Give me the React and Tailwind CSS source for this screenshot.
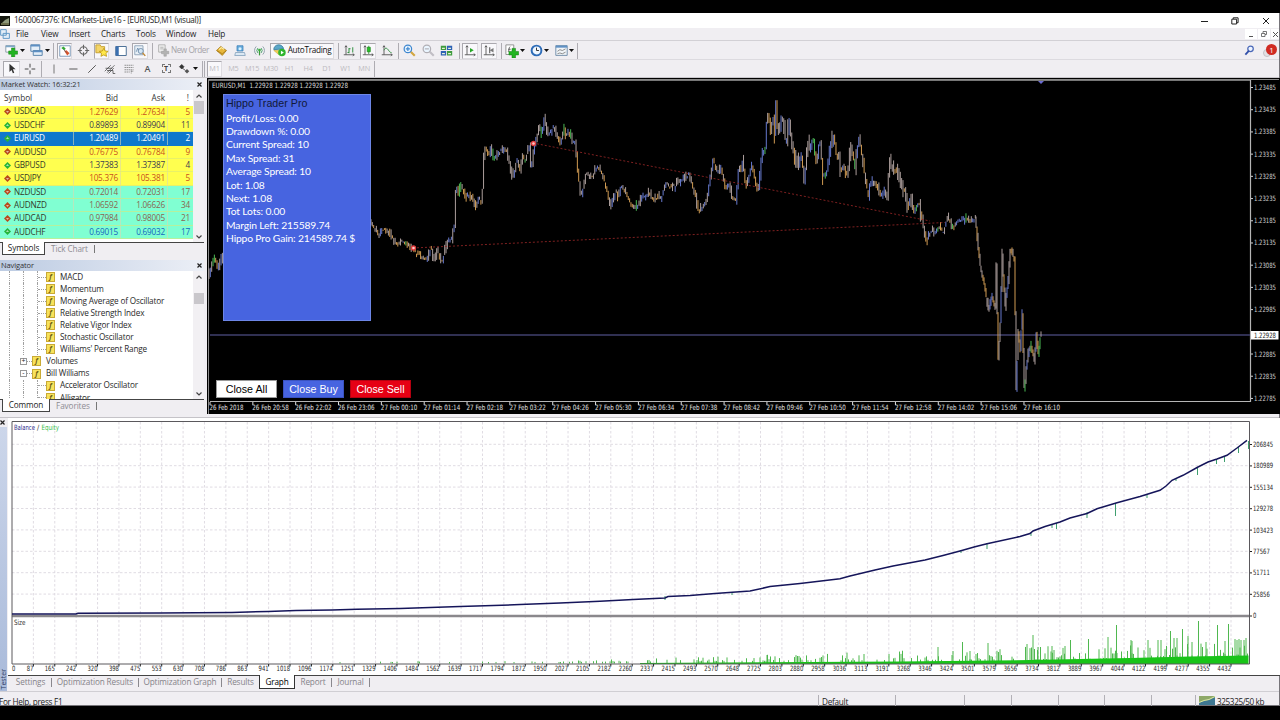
const UI = "font-['Open_Sans','Noto_Sans',sans-serif]";
const CHART_FONT = "'DejaVu Sans Condensed','DejaVu Sans',sans-serif";

/* ---------- data ---------- */

const MENU = [
  { label: 'File', w: 'w-[25px]' },
  { label: 'View', w: 'w-[28px]' },
  { label: 'Insert', w: 'w-[32px]' },
  { label: 'Charts', w: 'w-[35px]' },
  { label: 'Tools', w: 'w-[30px]' },
  { label: 'Window', w: 'w-[42px]' },
  { label: 'Help', w: 'w-[30px]' },
];

const QUOTES = [
  { symbol: 'USDCAD', bid: '1.27629', ask: '1.27634', spread: 5, up: false, bg: 'bg-[#ffff4f]', color: 'text-[#c8501e]' },
  { symbol: 'USDCHF', bid: '0.89893', ask: '0.89904', spread: 11, up: true, bg: 'bg-[#ffff4f]', color: 'text-[#3c3c50]' },
  { symbol: 'EURUSD', bid: '1.20489', ask: '1.20491', spread: 2, up: true, bg: 'bg-[#0f78cc]', color: 'text-white', selected: true },
  { symbol: 'AUDUSD', bid: '0.76775', ask: '0.76784', spread: 9, up: false, bg: 'bg-[#ffff4f]', color: 'text-[#c8501e]' },
  { symbol: 'GBPUSD', bid: '1.37383', ask: '1.37387', spread: 4, up: true, bg: 'bg-[#ffff4f]', color: 'text-[#3c3c50]' },
  { symbol: 'USDJPY', bid: '105.376', ask: '105.381', spread: 5, up: false, bg: 'bg-[#ffff4f]', color: 'text-[#c8501e]' },
  { symbol: 'NZDUSD', bid: '0.72014', ask: '0.72031', spread: 17, up: false, bg: 'bg-[#80ffd2]', color: 'text-[#8a6450]' },
  { symbol: 'AUDNZD', bid: '1.06592', ask: '1.06626', spread: 34, up: false, bg: 'bg-[#80ffd2]', color: 'text-[#8a6450]' },
  { symbol: 'AUDCAD', bid: '0.97984', ask: '0.98005', spread: 21, up: false, bg: 'bg-[#80ffd2]', color: 'text-[#8a6450]' },
  { symbol: 'AUDCHF', bid: '0.69015', ask: '0.69032', spread: 17, up: true, bg: 'bg-[#80ffd2]', color: 'text-[#1464c0]' },
];

const TREE = [
  { label: 'MACD', child: true },
  { label: 'Momentum', child: true },
  { label: 'Moving Average of Oscillator', child: true },
  { label: 'Relative Strength Index', child: true },
  { label: 'Relative Vigor Index', child: true },
  { label: 'Stochastic Oscillator', child: true },
  { label: "Williams' Percent Range", child: true },
  { label: 'Volumes', sign: '+' },
  { label: 'Bill Williams', sign: '-' },
  { label: 'Accelerator Oscillator', child: true },
  { label: 'Alligator', child: true },
];

// the current bid covers the 1.22935 label, so that step stays empty
const PRICES = [
  '1.23485', '1.23435', '1.23385', '1.23335', '1.23285', '1.23235', '1.23185', '1.23135',
  '1.23085', '1.23035', '1.22985', '', '1.22885', '1.22835', '1.22785',
];

const TIMES = [
  '26 Feb 2018', '26 Feb 20:58', '26 Feb 22:02', '26 Feb 23:06', '27 Feb 00:10', '27 Feb 01:14', '27 Feb 02:18',
  '27 Feb 03:22', '27 Feb 04:26', '27 Feb 05:30', '27 Feb 06:34', '27 Feb 07:38', '27 Feb 08:42', '27 Feb 09:46',
  '27 Feb 10:50', '27 Feb 11:54', '27 Feb 12:58', '27 Feb 14:02', '27 Feb 15:06', '27 Feb 16:10',
];

const EA_LINES = [
  'Profit/Loss: 0.00',
  'Drawdown %: 0.00',
  'Current Spread: 10',
  'Max Spread: 31',
  'Average Spread: 10',
  'Lot: 1.08',
  'Next: 1.08',
  'Tot Lots: 0.00',
  'Margin Left: 215589.74',
  'Hippo Pro Gain: 214589.74 $',
];

const PRICE_PATHS = [
  [[209, 278], [212, 270], [215, 256], [219, 266], [223, 255]],
  [
    [371, 224], [378, 231], [380, 239], [382, 229], [387, 228], [393, 239], [399, 243], [405, 241], [413, 248], [418, 254],
    [422, 256], [428, 261], [432, 248], [436, 262], [438, 249], [443, 263], [447, 245], [453, 237], [456, 223],
    [457, 184], [459, 193], [462, 185], [467, 198], [470, 193], [473, 198], [477, 208], [480, 197], [483, 203],
    [485, 152], [487, 147], [490, 157], [492, 143], [494, 160], [500, 153], [505, 149], [508, 153], [512, 170],
    [514, 178], [518, 158], [522, 173], [523, 153], [526, 160], [531, 144], [532, 174], [535, 150], [540, 129],
    [543, 133], [545, 118], [549, 134], [555, 127], [561, 143], [565, 127], [567, 138], [570, 129], [573, 143],
    [576, 140], [579, 173], [582, 199], [587, 172], [593, 179], [598, 167], [603, 173], [608, 190], [611, 205],
    [617, 190], [619, 198], [622, 185], [627, 193], [632, 203], [637, 207], [642, 198], [650, 194], [653, 198],
    [663, 196], [667, 184], [675, 187], [683, 179], [690, 175], [695, 190], [700, 212], [707, 201], [711, 180],
    [714, 159], [718, 173], [722, 168], [727, 190], [730, 182], [733, 199], [737, 201], [740, 162], [742, 172],
    [744, 160], [747, 187], [753, 164], [757, 183], [759, 194], [763, 153], [767, 147], [768, 109], [772, 135],
    [774, 111], [776, 141], [777, 102], [779, 137], [783, 114], [787, 145], [790, 117], [793, 148], [798, 163],
    [803, 156], [805, 182], [809, 143], [811, 150], [814, 135], [817, 163], [821, 141], [824, 178], [828, 170],
    [832, 144], [835, 135], [837, 153], [841, 160], [842, 181], [843, 163], [848, 175], [852, 148], [856, 167],
    [860, 138], [865, 170], [869, 194], [873, 180], [877, 184], [882, 198], [885, 188], [889, 203], [890, 158],
    [893, 167], [898, 172], [902, 187], [906, 192], [909, 209], [912, 198], [915, 211], [920, 204], [923, 217],
    [925, 233], [928, 242], [930, 233], [934, 232], [940, 226], [944, 232], [949, 217], [955, 227], [960, 220],
    [967, 218], [972, 223], [976, 218],
  ],
  [
    [976, 218], [978, 237], [981, 267], [985, 283], [989, 311], [993, 295], [996, 307], [997, 267], [999, 358],
    [1001, 323], [1003, 253], [1004, 273], [1006, 307], [1009, 280], [1011, 248], [1015, 259], [1016, 313],
    [1017, 388], [1019, 330], [1021, 350], [1023, 312], [1025, 388], [1029, 353], [1032, 345], [1035, 361],
    [1037, 333], [1039, 355], [1041, 337],
  ],
];

const BALANCE = [
  [12, 614], [76, 614], [78, 613.2], [160, 613], [232, 612.4], [268, 611.4], [296, 610.5], [332, 610], [357, 609.2],
  [400, 608.4], [460, 606.5], [520, 604.6], [560, 603], [600, 601.2], [633, 599.5], [665, 598], [668, 596.5],
  [690, 595.5], [715, 593.6], [750, 591], [770, 586.6], [800, 583.4], [840, 578.8], [850, 576], [875, 570], [893, 566],
  [925, 560], [943, 555.5], [960, 551], [975, 546.7], [987, 543.7], [1020, 536.5], [1030, 533.5], [1033, 531],
  [1045, 526.5], [1060, 522], [1070, 518], [1087, 513.5], [1097, 508.7], [1117, 502.7], [1140, 496.5], [1160, 490.3],
  [1166, 486], [1172, 480.3], [1183, 475.3], [1198, 467], [1208, 462], [1217, 459], [1227, 455.3], [1237, 448], [1247, 440.3],
];

const DRAWDOWNS = [
  [665, 596, 600], [732, 592, 595], [961, 550, 553], [987, 543, 549], [1031, 532, 536], [1052, 524, 528], [1056.5, 523, 529],
  [1087, 512, 518], [1115.5, 503, 516], [1147, 494, 498], [1176, 478, 481], [1197.5, 467, 475], [1216.5, 459, 464],
  [1224.5, 456, 462], [1238.5, 447, 453], [1248.5, 441, 449],
];

const SIZE_SPIKES = [
  [767, 655], [864, 654], [889, 654], [938, 647], [953, 651], [962.5, 642], [970, 651], [988, 643], [1027, 644], [1033, 635], [1038, 647],
  [1052, 646], [1065, 646], [1070.5, 640], [1088.5, 639], [1108, 637], [1116.5, 625], [1131, 640], [1132, 641],
  [1148, 640], [1158, 640], [1161, 640], [1170.5, 631], [1174, 638], [1177, 638], [1182.5, 629], [1188, 636],
  [1192, 642], [1198.5, 621], [1206, 642], [1217.5, 625], [1225, 641], [1228.5, 624], [1235, 639], [1237, 640],
  [1239, 639], [1241, 640], [1244, 640], [1246, 638],
];

const PASSES = [
  87, 165, 242, 320, 398, 475, 553, 630, 708, 786, 863, 941, 1018, 1096, 1174, 1251, 1329, 1406, 1484, 1562, 1639, 1717,
  1794, 1872, 1950, 2027, 2105, 2182, 2260, 2337, 2415, 2493, 2570, 2648, 2725, 2803, 2880, 2958, 3036, 3113, 3191, 3268,
  3346, 3424, 3501, 3579, 3656, 3734, 3812, 3889, 3967, 4044, 4122, 4199, 4277, 4355, 4432,
];

const BALANCE_TICKS = ['206845', '180989', '155134', '129278', '103423', '77567', '51711', '25856', '0'];

// small deterministic noise so the bars look the same on every render
function noise(n) {
  const v = Math.sin(n * 127.1 + 11.7) * 43758.5453;
  return v - Math.floor(v);
}

function valueAt(points, x) {
  for (let i = 1; i < points.length; i++) {
    if (x <= points[i][0]) {
      const [x0, y0] = points[i - 1];
      const [x1, y1] = points[i];
      return y0 + ((y1 - y0) * (x - x0)) / (x1 - x0);
    }
  }
  return points[points.length - 1][1];
}

/* ---------- icons ---------- */

function Icon({ size = 12, children }) {
  return (
    <svg width={size} height={size} viewBox="0 0 16 16" fill="none" className="shrink-0">
      {children}
    </svg>
  );
}

const Caret = () => (
  <span className="w-[5px] flex justify-center">
    <svg width="5" height="3" viewBox="0 0 5 3"><path d="M0 0h5L2.5 3z" fill="#111" /></svg>
  </span>
);

const Sep = ({ className = '' }) => <span className={`w-px h-4 bg-[#aeacb2] ${className}`} />;

function Slot({ className = '', pressed, children }) {
  return (
    <span className={`flex items-center justify-center h-4 shrink-0 ${pressed ? 'bg-[#f9f8fb] border border-r-[#dddbe0] border-b-[#dddbe0] border-t-[#aaa8ae] border-l-[#aaa8ae]' : ''} ${className}`}>
      {children}
    </span>
  );
}

const Plus = () => <path d="M8 5h4v3.500h3.500v4H12V16H8v-3.500H4.500v-4H8z" fill="#22b422" stroke="#128012" strokeWidth=".6" />;

const NewChartIcon = () => (
  <Icon size={13}>
    <path d="M1 2h11v8H1z" fill="#fff" stroke="#7d8f9c" />
    <path d="M1 2h11v2H1z" fill="#7da7c9" />
    <Plus />
  </Icon>
);
const ProfilesIcon = () => (
  <Icon size={13}>
    <path d="M1 1h11v8H1zM4 8h11v6H4z" fill="#e4eef8" stroke="#5d86ad" strokeWidth="1.2" />
    <path d="M1 1h11v2H1zM4 8h11v2H4z" fill="#5d8fc4" />
  </Icon>
);
const MarketIcon = () => (
  <Icon>
    <path d="M1 1h14v14H1z" fill="#fff" stroke="#5f84a8" />
    <path d="M3 4l3-2 3 3-2 2z" fill="#33a833" />
    <path d="M7 8l3-1 4 4-3 3z" fill="#d8552d" />
    <path d="M6 6l4 4" stroke="#555" />
  </Icon>
);
const TargetIcon = () => (
  <Icon size={13}>
    <circle cx="8" cy="8" r="4.6" stroke="#666" strokeWidth="1.5" />
    <path d="M8 1v5M8 10v5M1 8h5M10 8h5" stroke="#666" strokeWidth="1.3" />
  </Icon>
);
const StarFolderIcon = () => (
  <Icon size={14}>
    <path d="M1 1h5l1 2h4v7H1z" fill="#f4d568" stroke="#c49b28" />
    <path d="M10 5l1.6 3 3.4.4-2.5 2.3.7 3.4-3.2-1.6-3.2 1.6.7-3.4L5 8.400l3.400-.4z" fill="#ffe84a" stroke="#b8920f" strokeWidth=".9" />
  </Icon>
);
const PanelIcon = () => (
  <Icon>
    <path d="M1 2h14v12H1z" fill="#fff" stroke="#4b6f96" strokeWidth="1.3" />
    <path d="M1 2h4v12H1z" fill="#3a6fb0" />
  </Icon>
);
const TesterIcon = () => (
  <Icon>
    <path d="M1 1h11v12H1z" fill="#e9f0f7" stroke="#7891aa" />
    <path d="M3 9l2-5 2 5 2-3" stroke="#5f84a8" />
    <circle cx="9" cy="8" r="3.400" fill="#d5e6f5" stroke="#5d7c9c" />
    <path d="M11.500 10.500l3.500 4" stroke="#c08a3a" strokeWidth="2" />
  </Icon>
);
const OrderIcon = () => (
  <Icon size={13}>
    <path d="M2 1h8v9H2z" fill="#eee" stroke="#aaa" />
    <path d="M4 4h4M4 6h4" stroke="#aaa" />
    <path d="M8.500 6h3v3h3v3h-3v3h-3v-3h-3V9h3z" fill="#b3b3b3" stroke="#999" strokeWidth=".6" />
  </Icon>
);
const GoldIcon = () => (
  <Icon size={13}>
    <path d="M2 8l5-5 7 5-5 6z" fill="#e7b73c" stroke="#a87a14" />
    <path d="M2 8l7 4 5-4" stroke="#a87a14" />
    <path d="M5 7l3-2.500 3 2" stroke="#fff0a8" strokeWidth="1.300" />
  </Icon>
);
const ServerIcon = () => (
  <Icon>
    <path d="M4 1h8v7H4z" fill="#69aede" stroke="#3b7eb5" />
    <path d="M2 10h12l1 4H1z" fill="#dbe8f3" stroke="#7c9cb8" />
    <circle cx="8" cy="5" r="2" fill="#d9f1ff" />
  </Icon>
);
const SignalIcon = () => (
  <Icon size={13}>
    <path d="M4 3a7 7 0 000 10M12 3a7 7 0 010 10" stroke="#93a4ad" strokeWidth="1.200" />
    <path d="M6 5a4.500 4.500 0 000 6M10 5a4.500 4.500 0 010 6" stroke="#4aa06a" strokeWidth="1.200" />
    <path d="M8 8v6" stroke="#3a9a3a" strokeWidth="1.500" />
    <circle cx="8" cy="7.500" r="1.700" fill="#3ab03a" />
  </Icon>
);
const AutoIcon = () => (
  <Icon size={13}>
    <path d="M1 7a6 5.500 0 0112-1z" fill="#5ba7c8" stroke="#3a7d9c" />
    <path d="M1 8l6 5 5-5z" fill="#f0cf52" stroke="#c79f2c" strokeWidth=".6" />
    <circle cx="11" cy="10.500" r="4.600" fill="#2fb52f" />
    <path d="M9.800 8.200v4.600l3.500-2.300z" fill="#fff" />
  </Icon>
);
const Axes = ({ children }) => (
  <Icon>
    <path d="M4 1v12M1 13h14M4 1L2.500 3M4 1l1.500 2M15 13l-2-1.500M15 13l-2 1.500" stroke="#555" strokeWidth="1.200" />
    {children}
  </Icon>
);
const Magnifier = ({ plus, color = '#3d86cf', handle = '#d2a640' }) => (
  <Icon size={13}>
    <path d="M9.500 9.500l5 5" stroke={handle} strokeWidth="2.600" />
    <circle cx="6" cy="6" r="4.600" fill="#eaf5ff" stroke={color} strokeWidth="1.500" />
    <path d={plus ? 'M6 3.500v5M3.500 6h5' : 'M3.500 6h5'} stroke={color} strokeWidth="1.400" />
  </Icon>
);
const TileIcon = () => (
  <Icon size={13}>
    <path d="M1 2h6.500v5.500H1z M8.500 8.500H15V14H8.500z" fill="#3f9c3f" />
    <path d="M8.500 2H15v5.500H8.500z M1 8.500h6.500V14H1z" fill="#2d62b5" />
    <path d="M2.500 4.500h3.500v1.500H2.500zM10 4.500h3.500v1.500H10zM2.500 11h3.500v1.500H2.500zM10 11h3.500v1.500H10z" fill="#e8f3d8" />
  </Icon>
);
const IndicatorIcon = () => (
  <Icon size={14}>
    <path d="M1 1h9v11H1z" fill="#fff" stroke="#888" />
    <path d="M6 3C4 3 5 9 3.500 9M3.500 6h3" stroke="#555" />
    <Plus />
  </Icon>
);
const ClockIcon = () => (
  <Icon size={13}>
    <circle cx="8" cy="8" r="6" fill="#f0f7ff" stroke="#2d6cb8" strokeWidth="2.400" />
    <path d="M8 4.500V8h3" stroke="#333" strokeWidth="1.200" />
  </Icon>
);
const TemplateIcon = () => (
  <Icon size={13}>
    <path d="M1 2h14v12H1z" fill="#f0f4f8" stroke="#5d7c9c" />
    <path d="M1 2h14v2.500H1z" fill="#5f90c4" />
    <path d="M3 9l3-2 3 1 4-2M3 12l3-1 3 1 4-2" stroke="#777" />
  </Icon>
);

function FolderF() {
  return (
    <span className="w-[9px] h-[10px] shrink-0 bg-[#f7e25c] border border-[#c9aa35] text-[7px] leading-[8px] italic font-bold text-[#6b5a12] text-center">
      f
    </span>
  );
}

/* ---------- toolbars ---------- */

function TitleBar() {
  return (
    <div className="h-[15px] bg-white flex items-center shrink-0 pr-[9px]">
      <span className="w-[10px] h-[10px] bg-[#15180f] flex items-center justify-center">
        <svg width="9" height="8" viewBox="0 0 9 8"><path d="M1 6l3-3 4-2v5z" fill="#8f9a7c" /><path d="M0 7h8" stroke="#c7c98f" /></svg>
      </span>
      <span className="ml-[4px] text-[8.200px] tracking-[-0.330px] text-[#222]">1600067376: ICMarkets-Live16 - [EURUSD,M1 (visual)]</span>
      <span className="ml-auto flex items-center">
        <svg width="7" height="8" viewBox="0 0 7 8"><path d="M0 4.500h7" stroke="#222" /></svg>
        <svg className="ml-[23px]" width="8" height="8" viewBox="0 0 8 8" fill="none"><path d="M.8 2.200h4.800v4.800H.8zM2.200 2V.8h4.900v4.900H5.800" stroke="#222" /></svg>
        <svg className="ml-[23px]" width="8" height="8" viewBox="0 0 8 8"><path d="M1 1l6 6M7 1L1 7" stroke="#222" /></svg>
      </span>
    </div>
  );
}

function MenuBar() {
  return (
    <div className="h-[13px] flex items-center border-b border-[#d2d0d5] shrink-0">
      <span className="w-[10px] flex justify-center">
        <Icon size={10}><path d="M1 1h9v9H1zM5 7h10v8H5z" fill="#e4eef8" stroke="#5d96c4" strokeWidth="1.500" /></Icon>
      </span>
      <span className="w-[6px]" />
      <nav className="flex text-[8.200px] tracking-[-0.120px] text-[#1c1c1c]">
        {MENU.map((m) => (
          <span key={m.label} className={m.w}>{m.label}</span>
        ))}
      </nav>
      <span className="ml-auto flex gap-px text-[#555]">
        <span className="w-[12px] h-[10px] bg-white flex items-end justify-center pb-[2px]"><span className="w-[4px] h-px bg-[#555]" /></span>
        <span className="w-[12px] h-[10px] bg-white flex items-center justify-center">
          <svg width="6" height="6" viewBox="0 0 6 6" fill="none"><path d="M.5 2.500h3.500v3H.5zM2 2V.5h3.500v3H4" stroke="#555" strokeWidth=".8" /></svg>
        </span>
        <span className="w-[8px] h-[10px] bg-white flex items-center justify-center">
          <svg width="5" height="5" viewBox="0 0 5 5"><path d="M0 0l5 5M5 0L0 5" stroke="#555" /></svg>
        </span>
      </span>
    </div>
  );
}

function MainToolbar() {
  return (
    <div className="h-[19px] flex items-center pl-[2px] pt-px border-b border-[#dcdadf] shrink-0">
      <Slot className="w-[18px]"><NewChartIcon /></Slot>
      <Caret />
      <Slot className="w-[18px] ml-[2px]"><ProfilesIcon /></Slot>
      <Caret />
      <Sep className="ml-[3px]" />
      <Slot pressed className="w-[15px] ml-[3px]"><MarketIcon /></Slot>
      <Slot className="w-[18px] ml-[2px]"><TargetIcon /></Slot>
      <Slot pressed className="w-[15px] ml-[2px]"><StarFolderIcon /></Slot>
      <Slot className="w-[16px] ml-[4px]"><PanelIcon /></Slot>
      <Slot pressed className="w-[16px] ml-[3px]"><TesterIcon /></Slot>
      <Sep className="ml-[4px]" />
      <Slot className="w-[16px] ml-[2px]"><OrderIcon /></Slot>
      <span className="w-[38px] text-[8.200px] tracking-[-0.450px] text-[#a5a3a8] whitespace-nowrap">New Order</span>
      <Slot className="w-[16px] ml-[4px]"><GoldIcon /></Slot>
      <Slot className="w-[16px] ml-[3px]"><ServerIcon /></Slot>
      <Slot className="w-[16px] ml-[3px]"><SignalIcon /></Slot>
      <Slot pressed className="w-[64px] ml-[3px] gap-[2px]">
        <AutoIcon />
        <span className="text-[8.200px] tracking-[-0.300px] text-[#111]">AutoTrading</span>
      </Slot>
      <Sep className="ml-[4px]" />
      <Slot className="w-[16px] ml-[2px]"><Axes><path d="M8 4v7M8 5h2M6 10h2M13 3v7" stroke="#2f8f3f" strokeWidth="1.300" /></Axes></Slot>
      <Slot pressed className="w-[16px] ml-[3px]"><Axes><path d="M9 1v11" stroke="#1c8a1c" /><path d="M7 3h4v6H7z" fill="#27c427" stroke="#1c8a1c" /></Axes></Slot>
      <Slot className="w-[16px] ml-[3px]"><Axes><path d="M4 7c2-4 4-3 6 0s3 3 4 3" stroke="#2f8f3f" strokeWidth="1.300" /></Axes></Slot>
      <Sep className="ml-[3px]" />
      <Slot className="w-[16px] ml-[2px]"><Magnifier plus /></Slot>
      <Slot className="w-[16px] ml-[3px]"><Magnifier color="#b0aeb4" handle="#c0bec4" /></Slot>
      <Slot className="w-[16px] ml-[2px]"><TileIcon /></Slot>
      <Sep className="ml-[5px]" />
      <Slot pressed className="w-[16px] ml-[2px]"><Axes><path d="M8 4l5 3-5 3z" fill="#25a825" /></Axes></Slot>
      <Slot pressed className="w-[16px] ml-[3px]"><Axes><path d="M9 3v8" stroke="#444" strokeWidth="1.300" /><path d="M14 4v6l-5-3z" fill="#777" /></Axes></Slot>
      <Sep className="ml-[4px]" />
      <Slot className="w-[16px] ml-[2px]"><IndicatorIcon /></Slot>
      <Caret />
      <Slot className="w-[16px] ml-[3px]"><ClockIcon /></Slot>
      <Caret />
      <Slot className="w-[16px] ml-[4px]"><TemplateIcon /></Slot>
      <Caret />
      <Sep className="ml-[3px]" />
      <span className="ml-auto flex items-center">
        <Icon size={11}>
          <circle cx="9.500" cy="5.500" r="4" fill="#eef4ff" stroke="#4a68b8" strokeWidth="1.800" />
          <path d="M7 8.500L2 14" stroke="#2f4ea8" strokeWidth="2.600" />
        </Icon>
        <span className="relative ml-[8px] w-[16px] h-[14px]">
          <span className="absolute left-0 top-[5px] w-[8px] h-[8px] rounded-full bg-[#e2e0e4] border border-[#c4c2c7]" />
          <span className="absolute left-[3px] top-0 w-[11px] h-[11px] rounded-full bg-[#cf2a22] text-white text-[8px] leading-[11px] text-center">1</span>
        </span>
      </span>
    </div>
  );
}

function DrawToolbar() {
  return (
    <div className="h-[17px] flex items-center pl-[3px] shrink-0">
      <Slot pressed className="w-[17px]">
        <Icon size={11}><path d="M5 1v12l3-3 2 5 2-1-2-5h4z" fill="#333" /></Icon>
      </Slot>
      <Slot className="w-[19px]"><Icon><path d="M8 1v5M8 10v5M1 8h5M10 8h5" stroke="#333" strokeWidth="1.200" /></Icon></Slot>
      <Sep className="ml-[2px]" />
      <Slot className="w-[19px] ml-[2px]"><Icon><path d="M8 2v12" stroke="#666" strokeWidth="1.200" /></Icon></Slot>
      <Slot className="w-[19px]"><Icon><path d="M3 8h11" stroke="#555" strokeWidth="1.300" /></Icon></Slot>
      <Slot className="w-[19px]"><Icon><path d="M3 13L13 3" stroke="#555" strokeWidth="1.300" /></Icon></Slot>
      <Slot className="w-[18px]"><Icon><path d="M1 11L9 3M4 13L14 3M2 7h9M4 10h8M6 14l7-7M12 10v4h3" stroke="#444" /></Icon></Slot>
      <Slot className="w-[19px]"><Icon><path d="M2 3h12M2 6h12M2 9h12M2 12h7M11 10v4M11 11h3" stroke="#888" strokeWidth="1.200" strokeDasharray="2 .7" /></Icon></Slot>
      <Slot className="w-[19px] text-[9px] font-semibold text-[#555]">A</Slot>
      <Slot className="w-[18px]">
        <span className="w-[9px] h-[9px] border border-dashed border-[#777] text-[7px] leading-[7px] text-center font-bold text-[#444]">T</span>
      </Slot>
      <Slot className="w-[18px]"><Icon><path d="M2 5l3-3 3 3-3 3zM6 7l4 3" fill="#333" stroke="#333" /><path d="M9 11l3-3 3 3-3 3z" fill="#555" /></Icon></Slot>
      <Caret />
      <Sep className="ml-[4px]" />
      <Sep className="ml-[1px]" />
      <div className="ml-[2px] flex items-center text-[7.300px] tracking-[-0.200px] text-[#bcbabf]">
        <Slot pressed className="w-[15px] mr-[2px]">M1</Slot>
        {['M5', 'M15', 'M30', 'H1', 'H4', 'D1', 'W1', 'MN'].map((p) => (
          <span key={p} className="w-[18.700px] text-center">{p}</span>
        ))}
      </div>
      <Sep />
    </div>
  );
}

/* ---------- left column ---------- */

function PanelHeader({ title }) {
  return (
    <div className="h-[11px] shrink-0 flex items-center justify-between pr-[2px] pl-px bg-gradient-to-r from-[#bccbe2] to-[#eceff6] text-[7.500px] tracking-[-0.120px] text-[#333]">
      <span>{title}</span>
      <svg width="5" height="5" viewBox="0 0 5 5"><path d="M.5.5l4 4M4.500.5l-4 4" stroke="#222" strokeWidth="1.200" /></svg>
    </div>
  );
}

function Scrollbar({ thumb }) {
  return (
    <div className="w-[11px] shrink-0 bg-[#f2f0f3] flex flex-col items-center">
      <svg className="mt-[4px]" width="6" height="4" viewBox="0 0 6 4" fill="none"><path d="M.5 3.500L3 1l2.500 2.500" stroke="#444" strokeWidth="1.200" /></svg>
      <div className={`w-[10px] bg-[#c9c7cb] ${thumb}`} />
      <svg className="mt-auto mb-[3px]" width="6" height="4" viewBox="0 0 6 4" fill="none"><path d="M.5.5L3 3 5.500.5" stroke="#444" strokeWidth="1.200" /></svg>
    </div>
  );
}

function PanelTabs({ active, activeW, other }) {
  return (
    <div className="h-[13px] shrink-0 flex border-t border-[#444] text-[8.200px] tracking-[-0.100px] whitespace-nowrap">
      <span className={`${activeW} ml-[2px] -mt-px h-[13px] bg-white border border-t-0 border-[#444] text-center leading-[12px] text-[#222]`}>{active}</span>
      <span className="ml-[6px] leading-[11px] text-[#8e8c92]">{other}</span>
      <span className="ml-[6px] mt-[2px] w-px h-[8px] bg-[#777]" />
    </div>
  );
}

function MarketWatch() {
  return (
    <section className="flex flex-col h-[182px] pt-px shrink-0">
      <PanelHeader title="Market Watch: 16:32:21" />
      <div className="flex h-[152px] bg-white">
        <div className="w-[193px] text-[8.200px]">
          <div className="h-[15.500px] flex items-center pl-[4px] text-[#333]">
            <span className="w-[70px]">Symbol</span>
            <span className="w-[44px] text-right">Bid</span>
            <span className="w-[47px] text-right">Ask</span>
            <span className="w-[24px] text-right">!</span>
          </div>
          {QUOTES.map((q) => (
            <div key={q.symbol} className={`h-[13.370px] flex items-stretch border-b ${q.selected ? 'border-[#0f78cc]' : 'border-[#d9e87a]/60'} leading-[12.500px] tracking-[-0.200px] ${q.bg} ${q.color}`}>
              <span className={`w-[74px] flex items-center pl-[4px] border-r border-[#d8d8b0]/60 ${q.selected ? 'text-white' : 'text-[#333a28]'}`}>
                <svg className="mr-[3px] shrink-0" width="7" height="7" viewBox="0 0 7 7">
                  <path d="M3.500 0L7 3.500 3.500 7 0 3.500z" fill={q.up ? '#26b43a' : '#b84a1c'} />
                  <path d={q.up ? 'M3.500 2l1.500 2h-3z' : 'M3.500 5L2 3h3z'} fill="#fff" opacity=".6" />
                </svg>
                {q.symbol}
              </span>
              <span className="w-[47px] text-right pr-[2px] border-r border-[#d8d8b0]/60">{q.bid}</span>
              <span className="w-[47px] text-right pr-[2px] border-r border-[#d8d8b0]/60">{q.ask}</span>
              <span className="flex-1 text-right pr-[3px]">{q.spread}</span>
            </div>
          ))}
        </div>
        <Scrollbar thumb="h-[13px] mt-[3px]" />
      </div>
      <PanelTabs active="Symbols" activeW="w-[43px]" other="Tick Chart" />
    </section>
  );
}

function Navigator() {
  return (
    <section className="flex flex-col flex-1 min-h-0">
      <PanelHeader title="Navigator" />
      <div className="flex h-[128px] bg-white">
        <div className="w-[193px] overflow-hidden text-[8.200px] text-[#2a2a2a]">
          {TREE.map((t) => (
            <div key={t.label} className="h-[12.070px] flex items-center">
              <span className="w-[10px] h-full border-r border-dotted border-[#a0a0a0]" />
              {t.child ? (
                <>
                  <span className="w-[14px] h-full border-r border-dotted border-[#a0a0a0]" />
                  <span className="w-[14px] h-full border-r border-dotted border-[#a0a0a0]" />
                  <span className="w-[8px] border-t border-dotted border-[#a0a0a0]" />
                </>
              ) : (
                <>
                  <span className="w-[10px]" />
                  <span className="w-[7px] h-[7px] border border-[#999] text-[7px] leading-[4px] text-center">{t.sign}</span>
                  <span className="w-[5px] border-t border-dotted border-[#a0a0a0]" />
                </>
              )}
              <FolderF />
              <span className="ml-[5px] whitespace-nowrap tracking-[-0.170px]">{t.label}</span>
            </div>
          ))}
        </div>
        <Scrollbar thumb="h-[11px] mt-[14px]" />
      </div>
      <PanelTabs active="Common" activeW="w-[48px]" other="Favorites" />
    </section>
  );
}

/* ---------- price chart ---------- */

function candles() {
  const out = [];
  PRICE_PATHS.forEach((pts) => {
    const start = pts[0][0];
    const end = pts[pts.length - 1][0];
    const step = start > 970 ? 1 : 1.34;
    for (let x = start; x <= end; x += step) {
      const a = valueAt(pts, x);
      const b = valueAt(pts, Math.min(x + step, end));
      const r1 = noise(x);
      const r2 = noise(x + 0.5);
      const amp = x > 735 && x < 925 ? 9 : 5;
      const big = noise(x * 3) > 0.6 ? amp : amp * 0.3;
      const shift = (noise(x + 31) - 0.5) * 4;
      const up = b < a - 0.3;
      let color = up ? '#6b80d8' : '#dba356';
      if (r1 > 0.6) color = '#b5a7a4';
      if (r2 > 0.95) color = '#4fc45a';
      out.push({ x, y1: Math.min(a, b) + shift - r1 * big, y2: Math.max(a, b) + shift + r2 * big + 0.5, color });
    }
  });
  return out;
}

function PriceChart() {
  return (
    <section className="relative flex-1 bg-black">
      <svg className="block" width="1073" height="336" viewBox="207 78 1073 336" fontFamily={CHART_FONT} fontSize="7.300">
        <path d="M208.500 414V79.500H1279" stroke="#8a8a8a" fill="none" />
        <path d="M209 80.500H1250" stroke="#777" />
        <path d="M210 401.500H1250.500V80" stroke="#b5b5b5" fill="none" strokeWidth="1.200" />
        <path d="M1038 81h6l-3 3z" fill="#6a6ad0" />
        <path d="M210 335H1250" stroke="#40406e" strokeWidth="1.400" />
        {candles().map((c, i) => (
          <line key={i} x1={c.x} x2={c.x} y1={c.y1} y2={c.y2} stroke={c.color} strokeWidth=".95" />
        ))}
        <g stroke="#8c2424" strokeWidth=".9" strokeDasharray="2 2">
          <path d="M533 143L930 221M413 248L945 222.500" />
        </g>
        <g stroke="#e03c3c" strokeWidth="1.300" fill="#ffc8c8">
          <circle cx="533.500" cy="143.500" r="2" />
          <circle cx="413.500" cy="248" r="2" />
        </g>
        <text x="212" y="88" fill="#ddd" textLength="136" lengthAdjust="spacingAndGlyphs" xmlSpace="preserve">EURUSD,M1  1.22928 1.22928 1.22928 1.22928</text>
        {PRICES.map((p, i) => p && (
          <g key={i} fill="#d0d0d0">
            <rect x="1251" y={87 + i * 22.210} width="2" height="1" />
            <text x="1254" y={90 + i * 22.210} textLength="22" lengthAdjust="spacingAndGlyphs">{p}</text>
          </g>
        ))}
        <rect x="1251" y="331" width="27.500" height="8.500" fill="#fff" />
        <text x="1254" y="338" fill="#222" textLength="22" lengthAdjust="spacingAndGlyphs">1.22928</text>
        {TIMES.map((t, i) => (
          <g key={t} fill="#e0e0e0">
            <rect x={209.500 + i * 42.840} y="402" width="1" height="3" />
            <text x={209.500 + i * 42.840} y="409.700" textLength={i === 0 ? 34 : 36.500} lengthAdjust="spacingAndGlyphs">{t}</text>
          </g>
        ))}
      </svg>

      {/* expert advisor panel */}
      <div className="absolute left-[16px] top-[16px] w-[148px] h-[227px] bg-[#4764e0] border border-[#6d86e6] pl-[2px] pt-px">
        <div className="font-['Liberation_Sans',Arial,sans-serif] text-[10.700px] leading-[14px] text-[#101838]">Hippo Trader Pro</div>
        <div className="font-[Lato,sans-serif] text-[10.300px] tracking-[-0.150px] leading-[13.400px] text-white pt-[1.500px]">
          {EA_LINES.map((l) => (
            <div key={l} className="whitespace-nowrap">{l}</div>
          ))}
        </div>
      </div>

      <div className="absolute left-[9px] top-[302px] flex gap-[6px] font-['Liberation_Sans',Arial,sans-serif] text-[10.700px]">
        <button className="w-[61px] h-[18px] bg-white border border-[#999] text-black leading-none pt-px">Close All</button>
        <button className="w-[61px] h-[18px] bg-[#4764e0] border border-[#3a52c0] text-white leading-none pt-px">Close Buy</button>
        <button className="w-[61px] h-[18px] bg-[#e60014] border border-[#b40010] text-white leading-none pt-px">Close Sell</button>
      </div>
    </section>
  );
}

/* ---------- strategy tester ---------- */

function sizeBars() {
  const out = [];
  for (let x = 340; x < 1249; x += 1.5) {
    const t = Math.max(0, (x - 560) / 690);
    const r = noise(x);
    const chance = x < 560 ? 0.1 : 0.3 + t * 0.35;
    if (noise(x + 7) < chance) out.push([x, 662 - r * r * (1 + t * 17) - t * 4]);
  }
  return out;
}

function TesterGraph() {
  const step = 21.386;
  return (
    <svg className="block shrink-0" width="1272" height="257" viewBox="8 418 1272 257" fontFamily={CHART_FONT} fontSize="7.300">
      <path d="M8 418h1272v257H8z" fill="#fff" />
      <g stroke="#dcd8e0" strokeWidth=".9" strokeDasharray="2.500 2">
        {PASSES.map((p, i) => (
          <path key={p} d={`M${12 + (i + 1) * step} 422V664`} />
        ))}
        {BALANCE_TICKS.slice(0, 8).map((p, i) => (
          <path key={p} d={`M12 ${444.300 + i * 21.400}H1249`} />
        ))}
      </g>
      <g stroke="#4fb84f" strokeWidth="1">
        {sizeBars().map(([x, y]) => (
          <line key={x} x1={x} x2={x} y1={y} y2="663.500" />
        ))}
        {SIZE_SPIKES.map(([x, y]) => (
          <line key={x} x1={x} x2={x} y1={y} y2="663.500" />
        ))}
      </g>
      <path d="M640 664V663L900 661.500L1030 660L1130 658L1190 656.500L1248.500 655.500V664z" fill="#18c418" />
      <path d="M12 616H1249" stroke="#8a888c" strokeWidth="2.400" />
      <path d="M12 421.500H1249.500V664H12z" fill="none" stroke="#5a585c" />
      <g stroke="#3f9f6f">
        {DRAWDOWNS.map(([x, y1, y2]) => (
          <line key={x} x1={x} x2={x} y1={y1} y2={y2} />
        ))}
      </g>
      <polyline points={BALANCE.map((p) => p.join(',')).join(' ')} fill="none" stroke="#15155a" strokeWidth="1.500" />
      <text x="14" y="430" fill="#2a2a8c" textLength="21" lengthAdjust="spacingAndGlyphs">Balance</text>
      <text x="37" y="430" fill="#333">/</text>
      <text x="41.500" y="430" fill="#3cc04c" textLength="17.500" lengthAdjust="spacingAndGlyphs">Equity</text>
      <text x="14" y="625" fill="#333" textLength="11.500" lengthAdjust="spacingAndGlyphs">Size</text>
      <g fill="#222">
        {BALANCE_TICKS.map((t, i) => (
          <g key={t}>
            <rect x="1250" y={i === 8 ? 615.500 : 444 + i * 21.400} width="2" height="1" />
            <text x="1253" y={i === 8 ? 618.300 : 447 + i * 21.400} textLength={t.length * 3.350} lengthAdjust="spacingAndGlyphs">{t}</text>
          </g>
        ))}
        <text x="12" y="671" textLength="3.300" lengthAdjust="spacingAndGlyphs">0</text>
        {PASSES.map((p, i) => (
          <g key={p}>
            <rect x={11.500 + (i + 1) * step} y="664" width="1" height="2.500" />
            <text x={12 + (i + 1) * step} y="671" textAnchor="end" textLength={String(p).length * 3.350} lengthAdjust="spacingAndGlyphs">{p}</text>
          </g>
        ))}
      </g>
    </svg>
  );
}

function TesterTabs() {
  const sep = <span className="w-px h-[9px] mt-[2px] bg-[#8a888e]" />;
  return (
    <div className="h-[16px] flex border-t border-[#444] text-[8.200px] tracking-[-0.130px] leading-[12px] text-[#858389] text-center whitespace-nowrap">
      <span className="w-[43px] pl-[2px]">Settings</span>
      {sep}
      <span className="w-[86px]">Optimization Results</span>
      {sep}
      <span className="w-[82px]">Optimization Graph</span>
      {sep}
      <span className="w-[37px]">Results</span>
      <span className="w-[36px] h-[14px] -mt-px bg-white border border-t-0 border-[#333] text-black leading-[13px]">Graph</span>
      <span className="w-[36px]">Report</span>
      {sep}
      <span className="w-[37px]">Journal</span>
      {sep}
    </div>
  );
}

function Tester() {
  return (
    <section className="flex h-[273px] shrink-0">
      <div className="w-[8px] shrink-0 flex flex-col items-center bg-[#f0eef2]">
        <svg className="my-[2px] self-start" width="5" height="5" viewBox="0 0 5 5"><path d="M.5.5l4 4M4.500.5l-4 4" stroke="#222" strokeWidth="1.200" /></svg>
        <div className="w-[7px] self-start flex-1 bg-gradient-to-b from-[#ccd6ea] to-[#a9bada] flex items-end justify-center pb-[2px]">
          <span className="[writing-mode:vertical-rl] rotate-180 text-[7px] leading-[7px] text-[#2c3a60]">Tester</span>
        </div>
      </div>
      <div className="flex-1 flex flex-col">
        <TesterGraph />
        <TesterTabs />
      </div>
    </section>
  );
}

function StatusBar() {
  const cell = 'h-[11px] border-l border-[#b2b0b6]';
  return (
    <footer className="h-[15px] shrink-0 flex items-center border-t border-[#d0ced3] pt-[3px] text-[8.200px] leading-[11px] text-[#222]">
      <span className="w-[818px] -ml-px pt-px tracking-[-0.280px]">For Help, press F1</span>
      <span className={`${cell} w-[77px] pl-[3px] pt-px ml-px flex items-center tracking-[-0.250px]`}>Default</span>
      <span className={`${cell} w-[69px]`} />
      <span className={`${cell} w-[47px]`} />
      <span className={`${cell} w-[47px]`} />
      <span className={`${cell} w-[46px]`} />
      <span className={`${cell} w-[47px]`} />
      <span className={`${cell} w-[44px]`} />
      <span className={`${cell} flex-1 flex items-center pl-[3px] gap-[2px]`}>
        <svg width="16" height="9" viewBox="0 0 16 9"><path d="M0 0h16v9H0z" fill="#8ea868" /><path d="M0 9V7l5-2 5-1 6-3v8z" fill="#3f7892" /><path d="M0 6.500l5-2 5-1 6-3" stroke="#d9e8a8" fill="none" /></svg>
        <span className="pt-px tracking-[-0.400px]">325325/50 kb</span>
      </span>
    </footer>
  );
}

export default function App() {
  return (
    <div className={`w-[1280px] h-[720px] overflow-hidden bg-black pt-[13px] ${UI}`}>
      <div className="h-[693px] flex flex-col bg-[#f0eef2] border-r border-b border-[#77757a]">
        <TitleBar />
        <MenuBar />
        <MainToolbar />
        <DrawToolbar />
        <div className="h-px bg-[#c9c7cc] shrink-0" />
        <main className="flex h-[336px] shrink-0">
          <aside className="w-[207px] shrink-0 pr-[3px] flex flex-col">
            <MarketWatch />
            <Navigator />
          </aside>
          <PriceChart />
        </main>
        <div className="h-[4px] shrink-0 border-b border-[#c5c3c8]" />
        <Tester />
        <StatusBar />
      </div>
    </div>
  );
}
